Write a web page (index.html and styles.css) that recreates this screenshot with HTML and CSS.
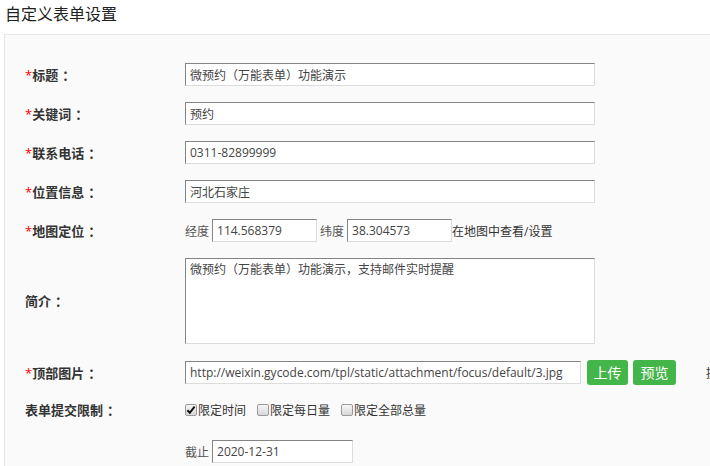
FILE: index.html
```html
<!DOCTYPE html>
<html lang="zh-CN">
<head>
<meta charset="utf-8">
<title>自定义表单设置</title>
<link rel="stylesheet" href="styles.css">
</head>
<body>
<h1 class="page-title">自定义表单设置</h1>
<div class="panel">
  <div class="row">
    <span class="label"><span class="req">*</span>标题<span class="colon">：</span></span>
    <input class="field field-wide" type="text" value="微预约（万能表单）功能演示">
  </div>
  <div class="row">
    <span class="label"><span class="req">*</span>关键词<span class="colon">：</span></span>
    <input class="field field-wide" type="text" value="预约">
  </div>
  <div class="row">
    <span class="label"><span class="req">*</span>联系电话<span class="colon">：</span></span>
    <input class="field field-wide" type="text" value="0311-82899999">
  </div>
  <div class="row">
    <span class="label"><span class="req">*</span>位置信息<span class="colon">：</span></span>
    <input class="field field-wide" type="text" value="河北石家庄">
  </div>
  <div class="row">
    <span class="label"><span class="req">*</span>地图定位<span class="colon">：</span></span>
    <span class="inline-text">经度</span>
    <input class="field field-coord" type="text" value="114.568379">
    <span class="inline-text lat">纬度</span>
    <input class="field field-coord" type="text" value="38.304573">
    <span class="map-link">在地图中查看/设置</span>
  </div>
  <div class="row">
    <span class="label">简介<span class="colon">：</span></span>
    <textarea class="field area">微预约（万能表单）功能演示，支持邮件实时提醒</textarea>
  </div>
  <div class="row row-image">
    <span class="label"><span class="req">*</span>顶部图片<span class="colon">：</span></span>
    <input class="field field-url" type="text" value="http://weixin.gycode.com/tpl/static/attachment/focus/default/3.jpg">
    <button class="btn btn-upload" type="button">上传</button>
    <button class="btn btn-preview" type="button">预览</button>
    <span class="hint">提示</span>
  </div>
  <div class="row row-limit">
    <span class="label">表单提交限制<span class="colon">：</span></span>
    <span class="check-item"><span class="cb checked"><svg viewBox="0 0 12 12" width="12" height="12"><path d="M2.4 6.2 L4.8 8.8 L9.6 2.6" fill="none" stroke="#111" stroke-width="2"/></svg></span>限定时间</span>
    <span class="check-item"><span class="cb"></span>限定每日量</span>
    <span class="check-item"><span class="cb"></span>限定全部总量</span>
  </div>
  <div class="row row-deadline">
    <span class="label"></span>
    <span class="inline-text">截止</span>
    <input class="field field-date" type="text" value="2020-12-31">
  </div>
</div>
</body>
</html>
```

FILE: styles.css
```css
html, body {
  margin: 0;
  padding: 0;
  background: #fff;
  overflow: hidden;
}
body {
  width: 710px;
  height: 466px;
  font-family: "Open Sans", "Noto Sans CJK SC", sans-serif;
  color: #333;
}
.page-title {
  margin: 0;
  height: 34px;
  line-height: 28px;
  padding-left: 5px;
  font-size: 16px;
  font-weight: normal;
  color: #222;
  box-sizing: border-box;
}
.panel {
  margin-left: 4px;
  border-top: 1px solid #e6e6e6;
  border-left: 1px solid #e6e6e6;
  background: #fafafa;
  padding: 28px 0 6px 20px;
}
.row {
  display: flex;
  align-items: center;
  margin-bottom: 16px;
  white-space: nowrap;
}
.row-deadline { margin-bottom: 0; }
.label {
  flex: 0 0 160px;
  font-size: 13px;
  font-weight: bold;
  color: #333;
  line-height: 16px;
}
.colon {
  margin-left: 4px;
}
.req {
  color: #f00;
  font-weight: normal;
}
.field {
  flex: 0 0 auto;
  box-sizing: border-box;
  height: 23px;
  margin: 0;
  border: 1px solid;
  border-color: #848484 #dcdcdc #dcdcdc #848484;
  background: #fff;
  font-family: "Open Sans", "Noto Sans CJK SC", sans-serif;
  font-size: 12px;
  color: #444;
  padding: 0 4px;
  outline: none;
}
.field-wide { width: 410px; }
.field-coord { width: 105px; }
.field-url { width: 396px; font-size: 12px; }
.field-date { width: 141px; }
.inline-text {
  font-size: 12px;
  color: #555;
  margin-right: 3px;
}
.lat { margin-left: 3px; }
.map-link {
  font-size: 12px;
  color: #333;
}
.area {
  width: 410px;
  height: 86px;
  resize: none;
  padding: 3px 4px;
  line-height: 16px;
  display: block;
}
.btn {
  flex: 0 0 auto;
  height: 25px;
  border: 0;
  border-radius: 3px;
  background: #44b549;
  color: #fff;
  font-family: "Open Sans", "Noto Sans CJK SC", sans-serif;
  font-size: 14px;
  padding: 0;
  line-height: 25px;
}
.btn-upload { width: 41px; margin-left: 6px; }
.btn-preview { width: 43px; margin-left: 5px; }
.hint {
  flex: 0 0 auto;
  margin-left: 30px;
  font-size: 12px;
  color: #333;
}
.row-limit { margin-bottom: 21px; }
.check-item {
  display: inline-flex;
  align-items: center;
  font-size: 12px;
  color: #333;
  margin-right: 11px;
}
.cb {
  display: inline-block;
  box-sizing: border-box;
  width: 12px;
  height: 12px;
  border: 1px solid #9a9a9a;
  border-radius: 2px;
  background: linear-gradient(#f6f6f6, #d8d8d8);
  margin-right: 1px;
  position: relative;
}
.cb svg {
  position: absolute;
  left: -1px;
  top: -1px;
}
```
